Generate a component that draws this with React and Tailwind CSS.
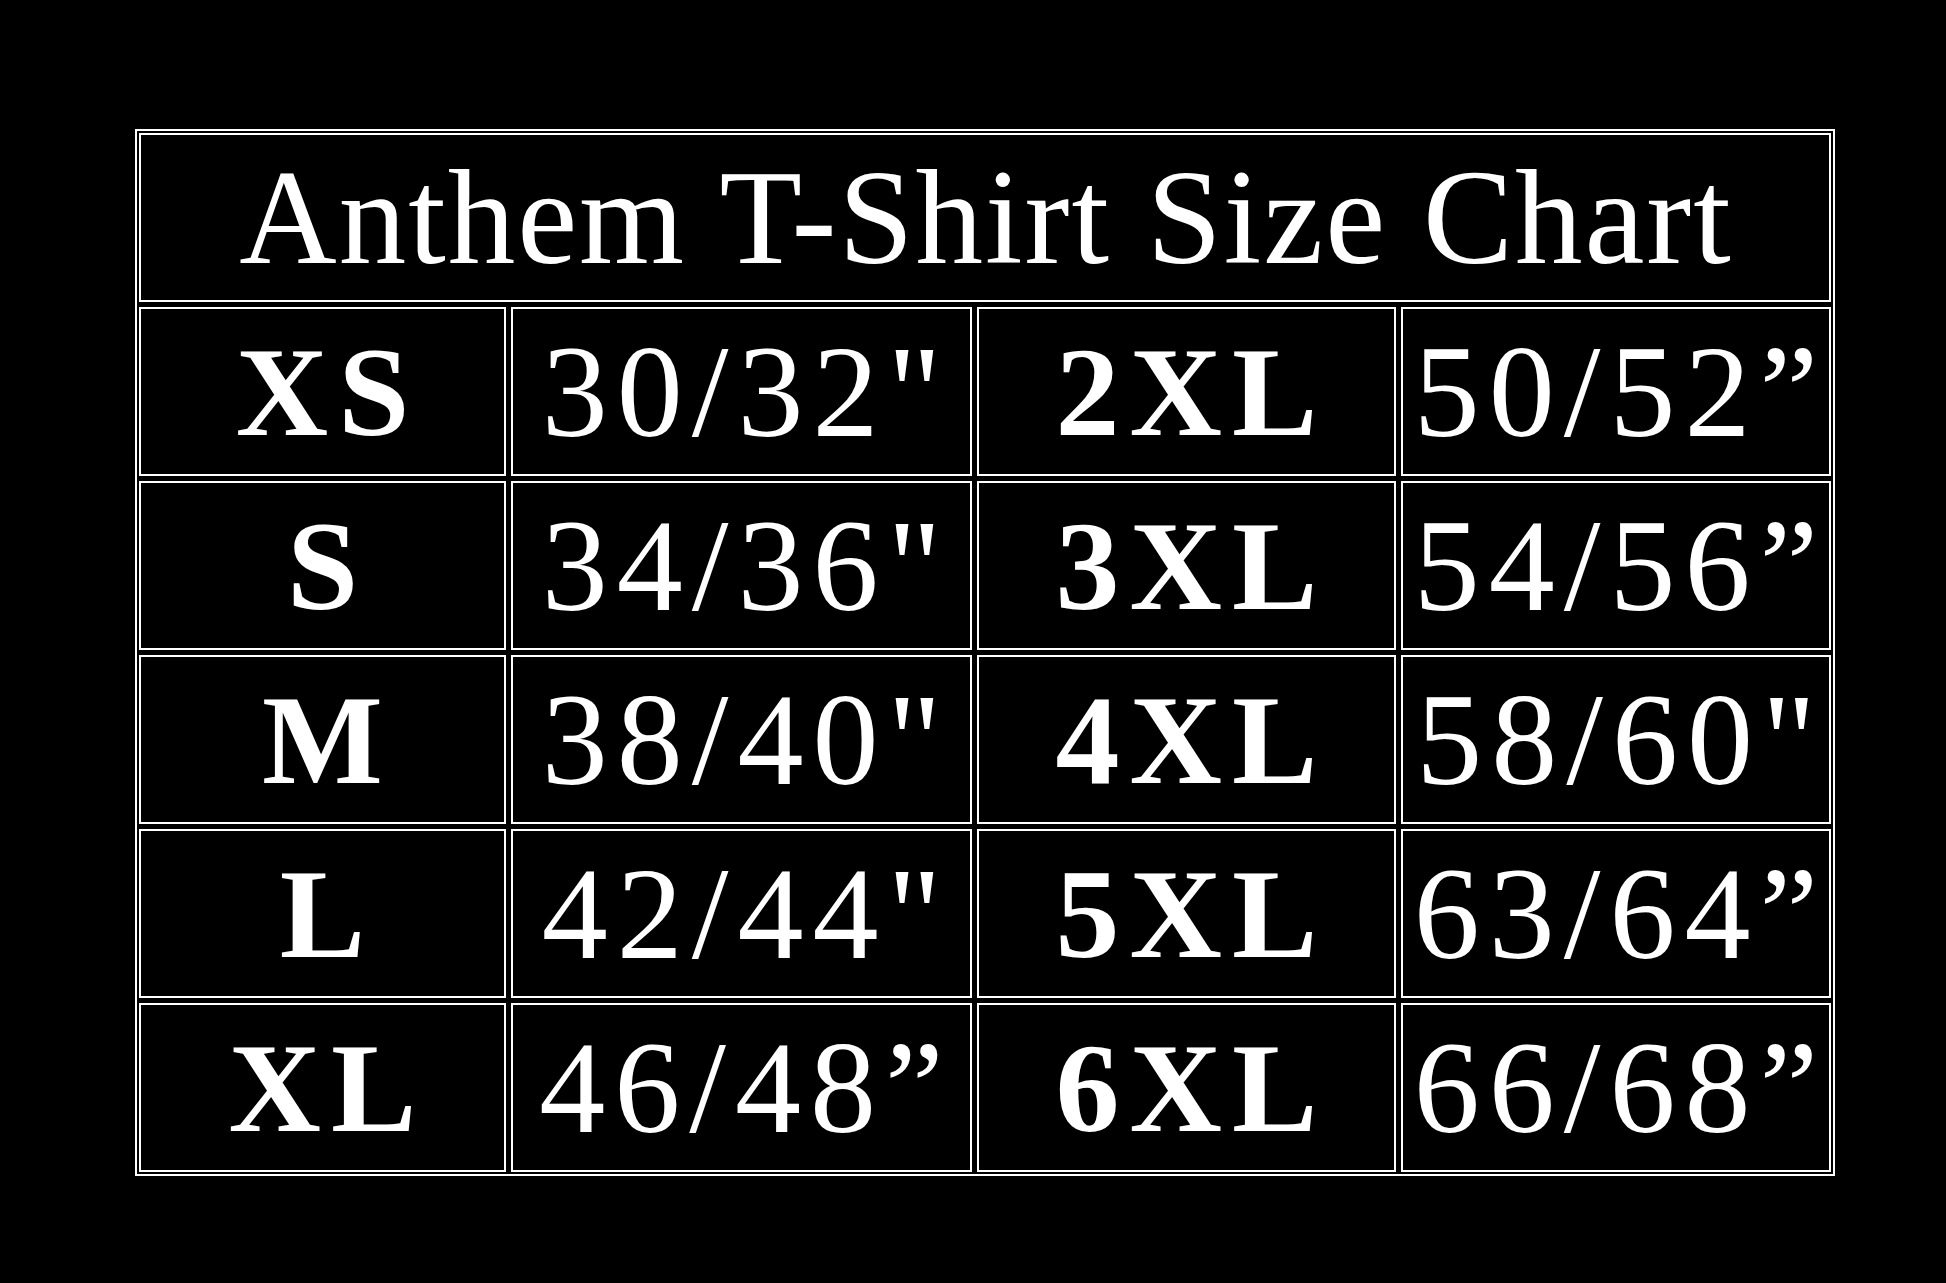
import React from 'react';

// rows of the chart: size, chest, size, chest
const rows = [
    ['XS', '30/32"', '2XL', '50/52\u201D'],
    ['S', '34/36"', '3XL', '54/56\u201D'],
    ['M', '38/40"', '4XL', '58/60"'],
    ['L', '42/44"', '5XL', '63/64\u201D'],
    ['XL', '46/48\u201D', '6XL', '66/68\u201D'],
];

const cell = "flex h-[169px] items-center justify-center border-2 border-white leading-none text-white";

const SizeCell = ({ children }) => (
    <div className={`${cell} pl-[10px] text-[128px] font-bold tracking-[10px]`}>
        {children}
    </div>
);

const MeasureCell = ({ children }) => (
    <div className={`${cell} pl-[9px] text-[132px] tracking-[9px]`}>
        {children}
    </div>
);

const App = () => {
    return (
        <div className="min-h-screen bg-black pl-[135px] pt-[129px] font-['Liberation_Serif',serif]">
            <div className="w-fit border-2 border-white p-[2px]">
                <div className="grid grid-cols-[367px_461px_419px_430px] gap-[5px]">
                    <div className={`${cell} col-span-4 pl-[2px] text-[135px] tracking-[2px]`}>
                        Anthem T-Shirt Size Chart
                    </div>
                    {rows.map((row) => (
                        <React.Fragment key={row[0]}>
                            <SizeCell>{row[0]}</SizeCell>
                            <MeasureCell>{row[1]}</MeasureCell>
                            <SizeCell>{row[2]}</SizeCell>
                            <MeasureCell>{row[3]}</MeasureCell>
                        </React.Fragment>
                    ))}
                </div>
            </div>
        </div>
    );
};

export default App;
